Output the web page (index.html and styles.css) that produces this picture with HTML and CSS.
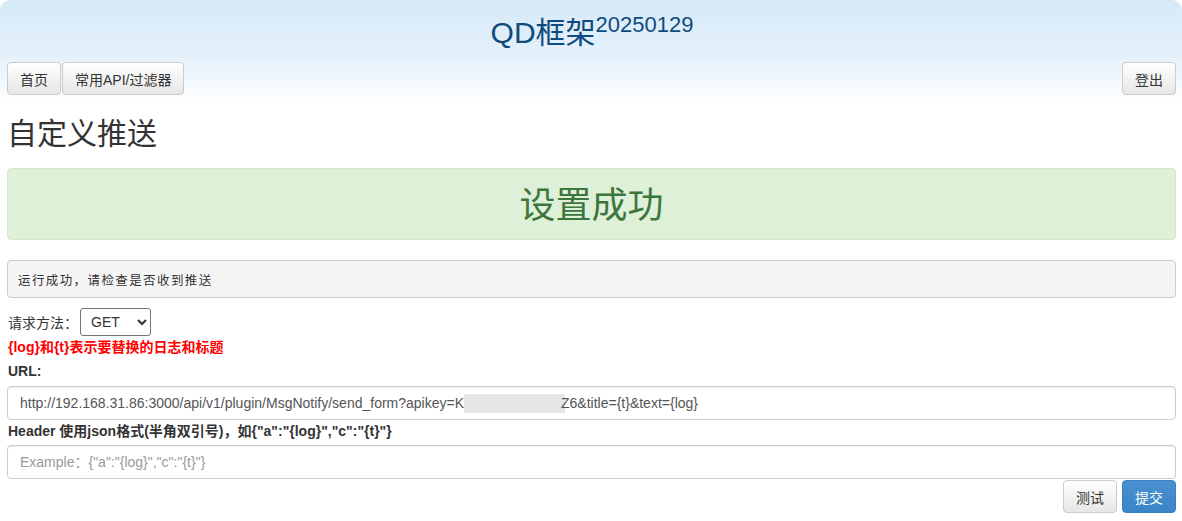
FILE: index.html
```html
<!DOCTYPE html>
<html lang="zh-CN">
<head>
<meta charset="utf-8">
<title>自定义推送</title>
<link rel="stylesheet" href="styles.css">
</head>
<body>
<header class="header">
  <h1 class="title">QD框架<sup class="ver">20250129</sup></h1>
  <nav class="nav">
    <div class="nav-left">
      <a class="btn btn-default">首页</a><a class="btn btn-default">常用API/过滤器</a>
    </div>
    <a class="btn btn-default">登出</a>
  </nav>
</header>
<main class="main">
  <h2 class="page-title">自定义推送</h2>
  <div class="alert">设置成功</div>
  <pre class="well">运行成功，请检查是否收到推送</pre>
  <form class="form">
    <div class="method-row">
      <label class="method-label">请求方法：</label>
      <select class="method-select"><option>GET</option><option>POST</option></select>
    </div>
    <div class="hint">{log}和{t}表示要替换的日志和标题</div>
    <label class="field-label">URL:</label>
    <div class="form-control url"><span>http://192.168.31.86:3000/api/v1/plugin/MsgNotify/send_form?apikey=K</span><span class="redact"></span><span>Z6&amp;title={t}&amp;text={log}</span></div>
    <label class="field-label header-label">Header 使用json格式(半角双引号)，如{"a":"{log}","c":"{t}"}</label>
    <input class="form-control" type="text" placeholder='Example：{"a":"{log}","c":"{t}"}'>
    <div class="actions">
      <a class="btn btn-default">测试</a>
      <a class="btn btn-primary">提交</a>
    </div>
  </form>
</main>
</body>
</html>
```
FILE: styles.css
```css
* { box-sizing: border-box; }
html, body { margin: 0; padding: 0; background: #fff; }
body {
  font-family: "Liberation Sans", Arial, "Noto Sans CJK SC", sans-serif;
  font-size: 14px;
  color: #333;
  width: 1182px;
}
.header {
  background: linear-gradient(to bottom, #d5e9f8 0%, #e6f2fb 55%, #ffffff 100%);
  border-radius: 10px 10px 0 0;
  height: 106px;
  padding: 0 6px 0 7px;
}
.title {
  margin: 0;
  padding-top: 16px;
  text-align: center;
  font-weight: normal;
  font-size: 30px;
  line-height: 34px;
  color: #0f4b7d;
  height: 62px;
  padding-left: 1px;
}
.ver {
  font-size: 22px;
  vertical-align: 11px;
  line-height: 0;
}
.nav {
  display: flex;
  justify-content: space-between;
}
.nav-left { display: flex; gap: 1px; }
.btn {
  display: inline-flex;
  align-items: center;
  justify-content: center;
  height: 33px;
  padding: 0 12px;
  font-size: 14px;
  border-radius: 4px;
  border: 1px solid #ccc;
  color: #333;
  background: linear-gradient(to bottom, #ffffff 0%, #e6e6e6 100%);
  text-decoration: none;
  cursor: pointer;
  white-space: nowrap;
}
.btn-primary {
  color: #fff;
  border-color: #3b7fc0;
  background: linear-gradient(to bottom, #4a90d0 0%, #3a85c6 100%);
}
.main { padding: 0 6px 0 7px; }
.page-title {
  margin: 8px 0 0 0;
  font-size: 30px;
  font-weight: normal;
  line-height: 40px;
  color: #333;
}
.alert {
  margin-top: 14px;
  height: 72px;
  display: flex;
  align-items: center;
  justify-content: center;
  background: #dff0d8;
  border: 1px solid #d6e9c6;
  border-radius: 4px;
  color: #3c763d;
  font-size: 36px;
  padding-bottom: 4px;
}
.well {
  margin: 20px 0 0;
  height: 38px;
  padding: 0 10px;
  display: flex;
  align-items: center;
  background: #f5f5f5;
  border: 1px solid #ccc;
  border-radius: 4px;
  font-family: "Noto Sans CJK SC", monospace;
  font-size: 12.5px;
  letter-spacing: 1.4px;
  color: #333;
}
.form { margin: 0; }
.method-row {
  display: flex;
  align-items: center;
  margin-top: 10px;
  height: 28px;
}
.method-label { font-size: 14px; margin-left: 1px; }
.method-select {
  margin-left: 2px;
  width: 71px;
  height: 28px;
  font-family: "Liberation Sans", Arial, sans-serif;
  font-size: 14px;
  padding: 0 6px;
  border: 1px solid #767676;
  border-radius: 3px;
  background: #fff;
  color: #333;
}
.hint {
  margin-top: 2px;
  color: #f00;
  font-weight: bold;
  font-size: 14px;
  line-height: 18px;
  margin-left: 1px;
}
.field-label {
  display: block;
  font-weight: bold;
  font-size: 14px;
  line-height: 18px;
  margin: 6px 0 6px 1px;
}
.header-label { margin-top: 2px; margin-bottom: 5px; }
.form-control {
  display: flex;
  align-items: center;
  width: 100%;
  height: 34px;
  padding: 0 12px;
  border: 1px solid #ccc;
  border-radius: 4px;
  font-family: "Liberation Sans", Arial, "Noto Sans CJK SC", sans-serif;
  font-size: 14px;
  color: #555;
  background: #fff;
  white-space: nowrap;
  box-shadow: inset 0 1px 1px rgba(0,0,0,.075);
}
.form-control::placeholder { color: #999; }
.redact {
  display: inline-block;
  width: 101px;
  height: 19px;
  background: #e6e6e6;
  margin: 0 -4px 0 0;
}
.actions {
  display: flex;
  justify-content: flex-end;
  gap: 5px;
  margin-top: 1px;
}
```
